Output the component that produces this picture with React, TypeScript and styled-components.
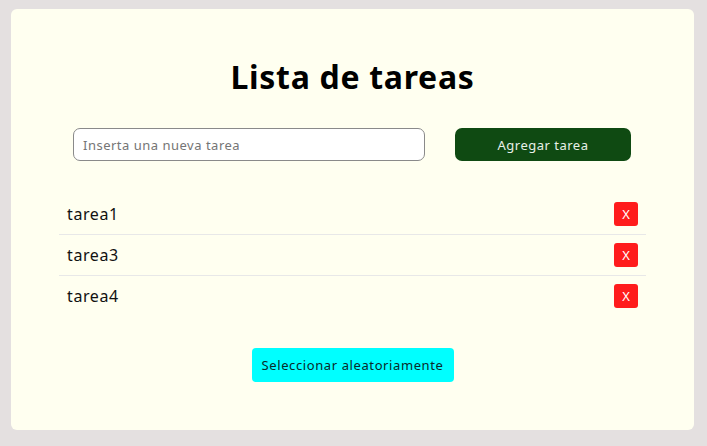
import React from "react";
import styled, { createGlobalStyle } from "styled-components";

const Global = createGlobalStyle`
  html, body { margin: 0; padding: 0; background: #e4e0e0; }
  body { font-family: "Noto Sans", "Open Sans", sans-serif; }
  * { box-sizing: border-box; }
`;

const Page = styled.div`
  padding: 9px 13px 16px 11px;
`;

const Card = styled.main`
  background: #fffff0;
  border-radius: 6px;
  height: 421px;
  padding: 46px 48px 0 48px;
  display: flex;
  flex-direction: column;
`;

const Title = styled.h1`
  margin: 0;
  text-align: center;
  font-size: 32px;
  font-weight: 700;
  line-height: 44px;
  letter-spacing: 0.7px;
  color: #000;
`;

const Form = styled.div`
  display: flex;
  align-items: center;
  margin-top: 29px;
  padding: 0 14px;
  gap: 30px;
`;

const Input = styled.input`
  width: 352px;
  height: 33px;
  border: 1px solid #8a8a8a;
  border-radius: 7px;
  background: #fff;
  padding: 0 9px;
  font-family: inherit;
  font-size: 13px;
  letter-spacing: 0.5px;
  &::placeholder { color: #757575; }
`;

const AddButton = styled.button`
  width: 176px;
  height: 33px;
  border: none;
  border-radius: 7px;
  background: #0f4a12;
  color: #e8f0e8;
  font-family: inherit;
  font-size: 13px;
  letter-spacing: 0.5px;
`;

const List = styled.ul`
  list-style: none;
  margin: 33px 0 0 0;
  padding: 0;
`;

const Row = styled.li<{ $last?: boolean }>`
  display: flex;
  align-items: center;
  justify-content: space-between;
  height: 41px;
  padding: 0 8px;
  border-bottom: 1px solid ${(p) => (p.$last ? "transparent" : "#e8e8e8")};
  font-size: 16px;
  letter-spacing: 0.6px;
  color: #111;
`;

const DeleteButton = styled.button`
  width: 24px;
  height: 24px;
  border: none;
  border-radius: 3px;
  background: #ff1c1c;
  color: #fff;
  font-family: inherit;
  font-size: 13px;
  padding: 0;
`;

const Footer = styled.div`
  display: flex;
  justify-content: center;
  margin-top: 31px;
`;

const RandomButton = styled.button`
  width: 202px;
  height: 34px;
  border: none;
  border-radius: 4px;
  background: #00ffff;
  color: #0a2a2a;
  font-family: inherit;
  font-size: 13px;
  letter-spacing: 0.6px;
`;

const tasks = ["tarea1", "tarea3", "tarea4"];

export default function App() {
  return (
    <Page>
      <Global />
      <Card>
        <Title>Lista de tareas</Title>
        <Form>
          <Input placeholder="Inserta una nueva tarea" />
          <AddButton>Agregar tarea</AddButton>
        </Form>
        <List>
          {tasks.map((t, i) => (
            <Row key={t} $last={i === tasks.length - 1}>
              <span>{t}</span>
              <DeleteButton>X</DeleteButton>
            </Row>
          ))}
        </List>
        <Footer>
          <RandomButton>Seleccionar aleatoriamente</RandomButton>
        </Footer>
      </Card>
    </Page>
  );
}
